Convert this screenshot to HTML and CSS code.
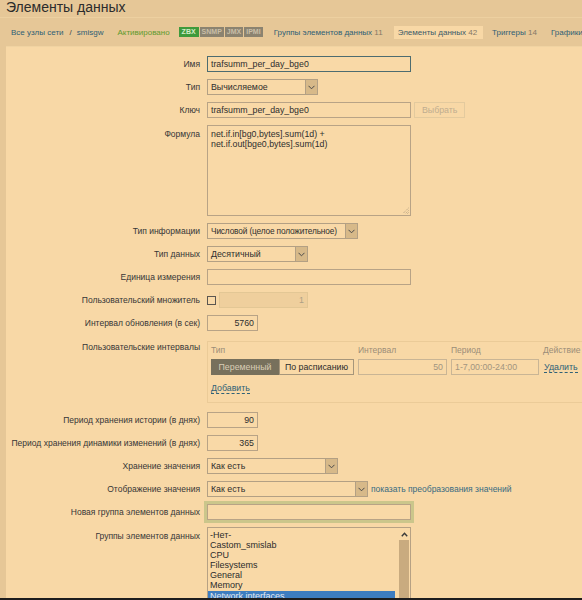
FILE: index.html
```html
<!DOCTYPE html>
<html lang="ru">
<head>
<meta charset="utf-8">
<title>Элементы данных</title>
<link rel="stylesheet" href="styles.css">
</head>
<body>
<div class="page">
  <header class="head">
    <h1 class="title">Элементы данных</h1>
  </header>
  <nav class="nav">
    <a class="lnk">Все узлы сети</a>
    <span class="sep">/</span>
    <a class="lnk">smisgw</a>
    <span class="status">Активировано</span>
    <span class="badges"><span class="b b-on">ZBX</span><span class="b">SNMP</span><span class="b">JMX</span><span class="b">IPMI</span></span>
    <a class="tab tab-first">Группы элементов данных <span class="cnt">11</span></a>
    <span class="tab tab-cur">Элементы данных <span class="cnt">42</span></span>
    <a class="tab tab-trig">Триггеры <span class="cnt">14</span></a>
    <a class="tab tab-graph">Графики</a>
  </nav>
  <main class="panel">
    <div class="form">
      <div class="lbl">Имя</div>
      <div class="fld"><div class="inp w-full focus">trafsumm_per_day_bge0</div></div>

      <div class="lbl">Тип</div>
      <div class="fld"><div class="sel w-type"><span class="sel-txt">Вычисляемое</span><span class="sel-arr"><svg width="7" height="5" viewBox="0 0 7 5"><polyline points="0.5,0.8 3.5,3.8 6.5,0.8" fill="none" stroke="#4a4a4a" stroke-width="1"/></svg></span></div></div>

      <div class="lbl">Ключ</div>
      <div class="fld"><div class="inp w-full">trafsumm_per_day_bge0</div><span class="btn-dis">Выбрать</span></div>

      <div class="lbl lbl-top">Формула</div>
      <div class="fld"><div class="area">net.if.in[bg0,bytes].sum(1d) +<br>net.if.out[bge0,bytes].sum(1d)<svg class="grip" width="7" height="7" viewBox="0 0 7 7"><line x1="6.5" y1="1" x2="1" y2="6.5" stroke="#9a8b74" stroke-width="0.8" stroke-dasharray="1 1"/><line x1="6.5" y1="3.5" x2="3.5" y2="6.5" stroke="#9a8b74" stroke-width="0.8" stroke-dasharray="1 1"/><line x1="6.5" y1="5.5" x2="5.5" y2="6.5" stroke="#9a8b74" stroke-width="0.8"/></svg></div></div>

      <div class="lbl">Тип информации</div>
      <div class="fld"><div class="sel w-info"><span class="sel-txt sel-tight">Числовой (целое положительное)</span><span class="sel-arr"><svg width="7" height="5" viewBox="0 0 7 5"><polyline points="0.5,0.8 3.5,3.8 6.5,0.8" fill="none" stroke="#4a4a4a" stroke-width="1"/></svg></span></div></div>

      <div class="lbl">Тип данных</div>
      <div class="fld"><div class="sel w-data"><span class="sel-txt">Десятичный</span><span class="sel-arr"><svg width="7" height="5" viewBox="0 0 7 5"><polyline points="0.5,0.8 3.5,3.8 6.5,0.8" fill="none" stroke="#4a4a4a" stroke-width="1"/></svg></span></div></div>

      <div class="lbl">Единица измерения</div>
      <div class="fld"><div class="inp w-full"></div></div>

      <div class="lbl">Пользовательский множитель</div>
      <div class="fld"><span class="chk"></span><div class="inp inp-dis w-mult num">1</div></div>

      <div class="lbl">Интервал обновления (в сек)</div>
      <div class="fld"><div class="inp w-short num">5760</div></div>

      <div class="lbl lbl-box">Пользовательские интервалы</div>
      <div class="fld fld-box">
        <div class="ibox">
          <div class="igrid">
            <span class="ih">Тип</span>
            <span class="ih">Интервал</span>
            <span class="ih">Период</span>
            <span class="ih">Действие</span>
            <div class="seg"><span class="seg-on">Переменный</span><span class="seg-off">По расписанию</span></div>
            <div class="inp inp-grey num">50</div>
            <div class="inp inp-grey">1-7,00:00-24:00</div>
            <a class="dash">Удалить</a>
          </div>
          <a class="dash add">Добавить</a>
        </div>
      </div>

      <div class="lbl after-box">Период хранения истории (в днях)</div>
      <div class="fld after-box"><div class="inp w-short num">90</div></div>

      <div class="lbl">Период хранения динамики изменений (в днях)</div>
      <div class="fld"><div class="inp w-short num">365</div></div>

      <div class="lbl">Хранение значения</div>
      <div class="fld"><div class="sel w-store"><span class="sel-txt">Как есть</span><span class="sel-arr"><svg width="7" height="5" viewBox="0 0 7 5"><polyline points="0.5,0.8 3.5,3.8 6.5,0.8" fill="none" stroke="#4a4a4a" stroke-width="1"/></svg></span></div></div>

      <div class="lbl">Отображение значения</div>
      <div class="fld"><div class="sel w-show"><span class="sel-txt">Как есть</span><span class="sel-arr"><svg width="7" height="5" viewBox="0 0 7 5"><polyline points="0.5,0.8 3.5,3.8 6.5,0.8" fill="none" stroke="#4a4a4a" stroke-width="1"/></svg></span></div><a class="map">показать преобразования значений</a></div>

      <div class="lbl">Новая группа элементов данных</div>
      <div class="fld"><div class="inp w-full newgrp"></div></div>

      <div class="lbl lbl-list">Группы элементов данных</div>
      <div class="fld">
        <div class="list">
          <div class="opts">
            <div class="opt">-Нет-</div>
            <div class="opt">Castom_smislab</div>
            <div class="opt">CPU</div>
            <div class="opt">Filesystems</div>
            <div class="opt">General</div>
            <div class="opt">Memory</div>
            <div class="opt opt-sel">Network interfaces</div>
            <div class="opt">OS</div>
          </div>
          <div class="scroll">
            <span class="scroll-up"><svg width="7" height="5" viewBox="0 0 7 5"><polyline points="0.8,4.2 3.5,1.2 6.2,4.2" fill="none" stroke="#3a3a3a" stroke-width="1.4"/></svg></span>
            <span class="scroll-track"></span>
          </div>
        </div>
      </div>
    </div>
  </main>
</div>
<div class="edge"></div>
</body>
</html>
```
FILE: styles.css
```css
* { box-sizing: border-box; }
html, body { margin: 0; padding: 0; height: 600px; overflow: hidden; }
body {
  background: #e6c797;
  font-family: "Liberation Sans", Arial, sans-serif;
  color: #3a3a3a;
}
a { cursor: pointer; }

.head {
  height: 18px;
  border-bottom: 1px solid #edd0a0;
  padding-left: 6px;
}
.title {
  margin: 0;
  font-size: 14px;
  font-weight: normal;
  line-height: 15px;
  color: #2c2c2c;
}

.nav {
  height: 28px;
  display: flex;
  align-items: center;
  padding-left: 11px;
  font-size: 8px;
  white-space: nowrap;
}
.lnk { color: #2f6075; }
.sep { margin: 0 5px 0 6px; color: #444; }
.status { margin-left: 14px; color: #5f9a2e; }
.badges { display: flex; margin-left: 9px; gap: 1px; }
.b {
  height: 10px;
  line-height: 10px;
  padding: 0 2px;
  font-size: 7px;
  font-weight: bold;
  background: #8b8370;
  color: #c9bea7;
}
.b-on { background: #3e9a3c; color: #d4ebc6; padding: 0 3px; }
.tab { color: #2f6075; padding: 0 4px; line-height: 13px; }
.tab-first { margin-left: 7px; }
.tab-cur { margin-left: 7px; padding: 0 6px 0 4px; background: #f8d8a6; color: #3a5a68; }
.tab-trig { margin-left: 5px; }
.tab-graph { margin-left: 6px; }
.cnt { color: #857966; }

.panel {
  margin-left: 6px;
  background: #f8d8a6;
  border-top: 1px solid #f0d3a2;
  padding-top: 9px;
  height: 560px;
}

.form {
  display: grid;
  grid-template-columns: 194px 1fr;
  column-gap: 7px;
  row-gap: 7px;
  align-items: start;
}
.lbl {
  text-align: right;
  font-size: 8.5px;
  line-height: 16px;
  color: #363636;
  white-space: nowrap;
}
.lbl-top { line-height: 10px; padding-top: 4px; }
.lbl-box { line-height: 10px; padding-top: 1px; margin-top: 3px; }
.lbl-list { line-height: 10px; padding-top: 4px; }
.fld { display: flex; align-items: center; gap: 3px; min-height: 16px; }
.fld-box { margin-top: 3px; }
.after-box { margin-top: 2px; }

.inp {
  height: 16px;
  border: 1px solid #b8a386;
  background: #f9d9a7;
  font-size: 8.8px;
  line-height: 14px;
  padding: 0 3px;
  color: #2e2e2e;
  white-space: nowrap;
  overflow: hidden;
}
.w-full { width: 204px; }
.w-short { width: 51px; }
.w-mult { width: 89px; }
.num { text-align: right; }
.focus { border-color: #4d6c70; }
.inp-dis { background: #efcf9d; border-color: #e3c795; color: #ad9f86; }
.inp-grey { border-color: #c9b595; color: #a29580; }
.newgrp { outline: 3px solid #cbc68b; }

.btn-dis {
  height: 16px;
  line-height: 14px;
  border: 1px solid #e3ca9e;
  padding: 0 7px;
  font-size: 8.8px;
  color: #c0ad90;
}

.sel {
  display: flex;
  height: 16px;
  border: 1px solid #b3a084;
  background: #f9d9a7;
  font-size: 8.8px;
  color: #2e2e2e;
}
.sel-txt { flex: 1; padding: 0 3px; line-height: 14px; white-space: nowrap; overflow: hidden; }
.sel-tight { font-size: 8.3px; letter-spacing: -0.15px; padding-right: 0; }
.sel-arr {
  width: 12px;
  background: #d7b989;
  border-left: 1px solid #b3a084;
  display: flex;
  align-items: center;
  justify-content: center;
}
.w-type { width: 111px; }
.w-info { width: 151px; }
.w-data { width: 101px; }
.w-store { width: 131px; }
.w-show { width: 161px; }

.area {
  position: relative;
  width: 204px;
  height: 91px;
  border: 1px solid #b8a386;
  background: #f9d9a7;
  font-size: 8.8px;
  line-height: 10px;
  padding: 3px 3px;
  color: #2e2e2e;
}
.grip { position: absolute; right: 1px; bottom: 1px; }

.chk {
  width: 9px;
  height: 9px;
  border: 1px solid #5b5650;
  background: #f9d9a7;
}

.ibox {
  width: 400px;
  border: 1px solid #ebcb98;
  padding: 3px 0 7px 3px;
}
.igrid {
  display: grid;
  grid-template-columns: 143px 89px 88px auto;
  column-gap: 4px;
  row-gap: 4px;
  align-items: center;
}
.ih { font-size: 8.5px; line-height: 10px; color: #9b8d78; }
.seg { display: flex; height: 16px; font-size: 8.8px; }
.seg-on {
  width: 68px;
  background: #77705c;
  color: #d9cdb5;
  text-align: center;
  line-height: 16px;
}
.seg-off {
  width: 75px;
  border: 1px solid #a6967b;
  background: #f9d9a7;
  color: #2c2c2c;
  text-align: center;
  line-height: 14px;
}
.dash {
  font-size: 8.8px;
  color: #2f6177;
  border-bottom: 1px dashed #2f6177;
  line-height: 10px;
  justify-self: start;
  margin-left: 1px;
}
.add { display: inline-block; margin-top: 8px; margin-left: 0; }
.map { font-size: 8.5px; color: #376a81; white-space: nowrap; }

.list {
  display: flex;
  width: 204px;
  height: 100px;
  border: 1px solid #b6a184;
  background: #f9d9a7;
}
.opts { flex: 1; padding: 2px 3px 0 0; overflow: hidden; }
.opt {
  font-size: 9px;
  line-height: 10.1px;
  padding-left: 2px;
  color: #2c2c2c;
  white-space: nowrap;
}
.opt-sel { background: #3d7dc0; color: #e3e9ef; }
.scroll { width: 12px; display: flex; flex-direction: column; }
.scroll-up { height: 12px; display: flex; align-items: center; justify-content: center; }
.scroll-track { flex: 1; background: #c9ab7f; margin: 0 1px; }

.edge {
  position: fixed;
  left: 0;
  right: 0;
  bottom: 0;
  height: 2px;
  background: #1d1d1d;
}
```
